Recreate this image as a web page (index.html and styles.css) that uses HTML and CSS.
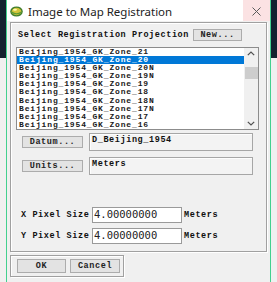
FILE: index.html
```html
<!DOCTYPE html>
<html>
<head>
<meta charset="utf-8">
<link rel="stylesheet" href="styles.css">
</head>
<body>
<div class="window">
  <div class="titlebar">
    <svg class="appicon" width="13" height="11" viewBox="0 0 13 11">
      <ellipse cx="6.5" cy="5.5" rx="5.6" ry="4.4" fill="#d2c43a" stroke="#3f7d2c" stroke-width="1.4"/>
      <path d="M1.6 6.2 Q6.5 9.5 11.4 6.2" fill="none" stroke="#5a9a34" stroke-width="1.4"/>
      <ellipse cx="5" cy="3.8" rx="2" ry="1" fill="#fff7b0"/>
    </svg>
    <span class="title">Image to Map Registration</span>
    <div class="close">
      <svg width="9" height="9" viewBox="0 0 9 9"><path d="M0.5 0.5 L8.5 8.5 M8.5 0.5 L0.5 8.5" stroke="#5a5a5a" stroke-width="1"/></svg>
    </div>
  </div>
  <div class="client">
    <div class="frame">
      <div class="header">
        <span class="label grow">Select Registration Projection</span>
        <button class="btn btn-new">New...</button>
      </div>
      <div class="listbox">
        <div class="items">
          <div class="item">Beijing_1954_GK_Zone_21</div>
          <div class="item selected">Beijing_1954_GK_Zone_20</div>
          <div class="item">Beijing_1954_GK_Zone_20N</div>
          <div class="item">Beijing_1954_GK_Zone_19N</div>
          <div class="item">Beijing_1954_GK_Zone_19</div>
          <div class="item">Beijing_1954_GK_Zone_18</div>
          <div class="item">Beijing_1954_GK_Zone_18N</div>
          <div class="item">Beijing_1954_GK_Zone_17N</div>
          <div class="item">Beijing_1954_GK_Zone_17</div>
          <div class="item">Beijing_1954_GK_Zone_16</div>
        </div>
        <div class="scrollbar">
          <svg class="arrow" width="8" height="5" viewBox="0 0 8 5"><path d="M0.8 4.2 L4 1 L7.2 4.2" fill="none" stroke="#505050" stroke-width="1.2"/></svg>
          <div class="thumb"></div>
          <svg class="arrow down" width="8" height="5" viewBox="0 0 8 5"><path d="M0.8 0.8 L4 4 L7.2 0.8" fill="none" stroke="#505050" stroke-width="1.2"/></svg>
        </div>
      </div>
      <div class="row datum-row">
        <button class="btn btn-side">Datum...</button>
        <div class="field">D_Beijing_1954</div>
      </div>
      <div class="row units-row">
        <button class="btn btn-side">Units...</button>
        <div class="field">Meters</div>
      </div>
      <div class="row size-row x-row">
        <span class="label size-label">X Pixel Size</span>
        <div class="input">4.00000000</div>
        <span class="label unit">Meters</span>
      </div>
      <div class="row size-row y-row">
        <span class="label size-label">Y Pixel Size</span>
        <div class="input">4.00000000</div>
        <span class="label unit">Meters</span>
      </div>
    </div>
    <div class="bottom">
      <button class="btn btn-ok">OK</button>
      <button class="btn btn-cancel">Cancel</button>
    </div>
  </div>
</div>
</body>
</html>
```

FILE: styles.css
```css
html, body {
  margin: 0;
  padding: 0;
}
body {
  width: 277px;
  height: 282px;
  overflow: hidden;
  background: linear-gradient(#14212f 0, #14212f 58px, #f0f0f0 58px);
}
.window {
  margin-left: 6px;
  width: 265px;
  height: 282px;
  box-sizing: border-box;
  border-left: 1px solid #43d08f;
  border-right: 1px solid #43d08f;
  background: #f0f0f0;
  display: flex;
  flex-direction: column;
}
.titlebar {
  height: 21px;
  background: #ffffff;
  display: flex;
  align-items: center;
  flex-shrink: 0;
}
.appicon {
  margin-left: 3px;
  margin-top: 2px;
}
.title {
  margin-left: 5px;
  font-family: "Noto Sans", sans-serif;
  font-size: 11.5px;
  color: #222;
  flex: 1;
  padding-top: 2px;
}
.close {
  width: 27px;
  height: 21px;
  background: #fbe2e3;
  display: flex;
  align-items: center;
  justify-content: center;
  padding-top: 2px;
  box-sizing: border-box;
}
.client {
  flex: 1;
  padding: 1px 0 0 3px;
}
.frame {
  width: 257px;
  height: 230px;
  box-sizing: border-box;
  border: 1px solid #a0a0a0;
  box-shadow: inset 1px 1px 0 #ffffff, 1px 1px 0 #ffffff;
}
.label, .item, .field, .btn {
  font-family: "Liberation Mono", "Courier New", monospace;
  font-weight: bold;
  font-size: 8.5px;
  letter-spacing: 0.6px;
  color: #111;
}
.header {
  margin-top: 6px;
  height: 12px;
  display: flex;
  align-items: center;
  padding-left: 7px;
}
.grow {
  flex: 1;
}
.btn {
  margin: 0;
  padding: 0;
  box-sizing: border-box;
  background: #e3e3e3;
  border: 1px solid #acacac;
  line-height: 10px;
  color: #222;
}
.btn-new {
  width: 49px;
  height: 12px;
  margin-right: 24px;
}
.listbox {
  margin: 6px 0 0 5px;
  width: 243px;
  height: 83px;
  box-sizing: border-box;
  border: 1px solid #8c8c8c;
  background: #ffffff;
  display: flex;
}
.items {
  flex: 1;
}
.item {
  height: 8.1px;
  line-height: 8.1px;
  font-size: 8px;
  letter-spacing: 0.85px;
  padding-left: 2px;
  white-space: nowrap;
  color: #1a1a1a;
}
.item.selected {
  background: #0078d7;
  color: #ffffff;
}
.scrollbar {
  width: 14px;
  background: #f0f0f0;
  display: flex;
  flex-direction: column;
  align-items: center;
}
.arrow {
  margin-top: 3px;
}
.thumb {
  margin-top: 11px;
  width: 13px;
  height: 12px;
  background: #cdcdcd;
}
.arrow.down {
  margin-top: auto;
  margin-bottom: 3px;
}
.row {
  display: flex;
  align-items: center;
}
.datum-row {
  margin-top: 3px;
  padding-left: 11px;
}
.units-row {
  margin-top: 6px;
  padding-left: 11px;
}
.btn-side {
  width: 61px;
  height: 12px;
}
.field {
  margin-left: 6px;
  width: 164px;
  height: 18px;
  box-sizing: border-box;
  border: 1px solid #a6a6a6;
  box-shadow: inset 1px 1px 0 #fdfdfd;
  background: #f3f3f3;
  padding: 1px 0 0 2px;
  line-height: 10px;
}
.size-row {
  padding-left: 10px;
}
.x-row {
  margin-top: 32px;
}
.y-row {
  margin-top: 5px;
}
.size-label {
  width: 71px;
  white-space: nowrap;
}
.input {
  width: 90px;
  height: 16px;
  box-sizing: border-box;
  border: 1px solid #9a9a9a;
  background: #ffffff;
  font-family: "DejaVu Sans Mono", monospace;
  font-size: 10.5px;
  line-height: 12px;
  padding-left: 1px;
  color: #222;
}
.unit {
  margin-left: 2px;
}
.bottom {
  margin: 3px 0 0 0;
  width: 114px;
  height: 22px;
  box-sizing: border-box;
  border: 1px solid #a0a0a0;
  box-shadow: inset 1px 1px 0 #ffffff, 1px 1px 0 #ffffff;
  padding: 3px 0 0 6px;
  display: flex;
  align-items: flex-start;
}
.btn-ok {
  width: 49px;
  height: 14px;
}
.btn-cancel {
  width: 50px;
  height: 14px;
  margin-left: 4px;
}
```
